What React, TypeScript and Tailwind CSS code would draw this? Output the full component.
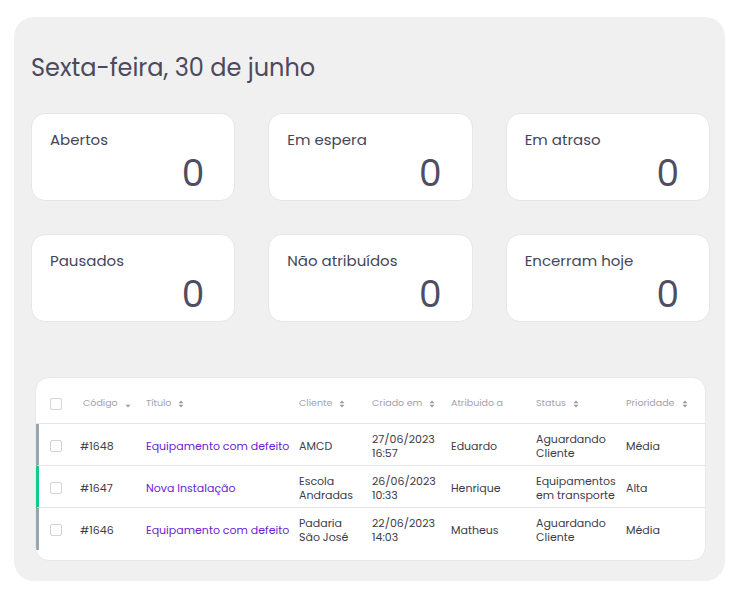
import React from 'react';

const font = { fontFamily: '"Poppins", "Inter", "Noto Sans", sans-serif' };

const cards = [
  { label: 'Abertos', value: 0 },
  { label: 'Em espera', value: 0 },
  { label: 'Em atraso', value: 0 },
  { label: 'Pausados', value: 0 },
  { label: 'Não atribuídos', value: 0 },
  { label: 'Encerram hoje', value: 0 },
];

const tickets = [
  { code: '#1648', title: 'Equipamento com defeito', client: ['AMCD'], created: ['27/06/2023', '16:57'], who: 'Eduardo', status: ['Aguardando', 'Cliente'], prio: 'Média', bar: 'border-l-[#97a5ae]' },
  { code: '#1647', title: 'Nova Instalação', client: ['Escola', 'Andradas'], created: ['26/06/2023', '10:33'], who: 'Henrique', status: ['Equipamentos', 'em transporte'], prio: 'Alta', bar: 'border-l-[#13cc8a]' },
  { code: '#1646', title: 'Equipamento com defeito', client: ['Padaria', 'São José'], created: ['22/06/2023', '14:03'], who: 'Matheus', status: ['Aguardando', 'Cliente'], prio: 'Média', bar: 'border-l-[#97a5ae]' },
];

const cols = 'grid grid-cols-[33px_63px_153px_73px_79px_85px_90px_1fr] items-center';

function Sort({ down }: { down?: boolean }) {
  return (
    <svg width="6" height="8" viewBox="0 0 6 8" className="ml-[7px] inline-block">
      {!down && <path d="M0.5 3.2 L3 0.6 L5.5 3.2 Z" fill="#9a9aa4" />}
      <path d="M0.5 4.8 L3 7.4 L5.5 4.8 Z" fill="#9a9aa4" />
    </svg>
  );
}

function Check() {
  return <div className="w-[12px] h-[12px] border border-[#d4d4d8] rounded-[2px] bg-white" />;
}

function Lines({ items }: { items: string[] }) {
  return (
    <div className="flex flex-col">
      {items.map((s) => (
        <span key={s} className="whitespace-nowrap">{s}</span>
      ))}
    </div>
  );
}

export default function App() {
  return (
    <div className="w-[740px] h-[602px] bg-white pt-[17px] pl-[14px]" style={font}>
      <div className="w-[711px] h-[564px] bg-[#f0f0f0] rounded-[20px] pl-[17px] pr-[15px] pt-[36px]">
        <h1 className="text-[24px] leading-[30px] text-[#4a4a5c] font-normal">Sexta-feira, 30 de junho</h1>

        <div className="grid grid-cols-3 gap-x-[33px] gap-y-[33px] mt-[30px]">
          {cards.map((c) => (
            <div key={c.label} className="h-[88px] bg-white rounded-[14px] border border-[#e6e6e6] pt-[16px] pl-[18px] pr-[30px]">
              <div className="text-[15px] leading-[20px] text-[#45455a]">{c.label}</div>
              <div className="text-right text-[36px] leading-[40px] text-[#4e4e62] mt-[4px]">{c.value}</div>
            </div>
          ))}
        </div>

        <div className="mt-[55px] mx-[4px] bg-white rounded-[14px] border border-[#e8e8e8] pb-[10px] overflow-hidden">
          <div className={`${cols} pl-[14px] h-[46px] pt-[6px] border-b border-[#e6e6e6] text-[9.5px] text-[#a2a2ac]`}>
            <Check />
            <div>Código<Sort down /></div>
            <div>Título<Sort /></div>
            <div>Cliente<Sort /></div>
            <div>Criado em<Sort /></div>
            <div>Atribuido a</div>
            <div>Status<Sort /></div>
            <div>Prioridade<Sort /></div>
          </div>
          {tickets.map((t, i) => (
            <div key={t.code} className={`${cols} pl-[11px] h-[42px] pt-[2px] border-l-[3px] ${t.bar} ${i < 2 ? 'border-b border-b-[#e6e6e6]' : ''} text-[11px] leading-[14px] text-[#3c3c4c]`}>
              <Check />
              <div className="-ml-[3px]">{t.code}</div>
              <div className="text-[#6a22d2] whitespace-nowrap">{t.title}</div>
              <Lines items={t.client} />
              <Lines items={t.created} />
              <div>{t.who}</div>
              <Lines items={t.status} />
              <div>{t.prio}</div>
            </div>
          ))}
        </div>
      </div>
    </div>
  );
}
